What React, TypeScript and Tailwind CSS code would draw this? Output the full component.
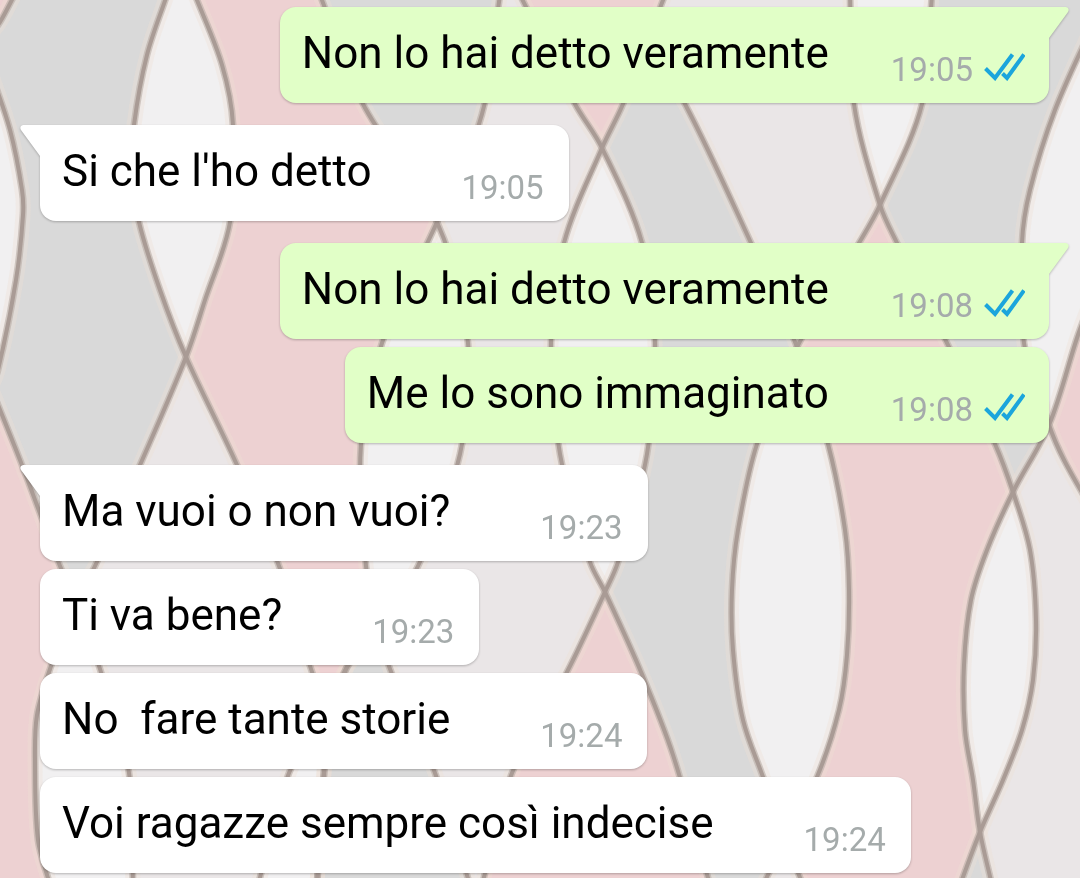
import React from "react";

type Point = [number, number];

type Region = { fill: string; left: Point[]; right: Point[] };

type Message = { text: string; time: string; sent: boolean; first: boolean };

const GREY = "#d9d9d9";
const PINK = "#edd1d2";
const WHITE = "#f1f0f1";
const LILAC = "#eae6e7";

const regions: Region[] = [
  {
    fill: GREY,
    left: [[-10, -10], [-10, 385], [20, 460], [60, 566], [76, 600]],
    right: [[167, -5], [147, 55], [134, 125], [132, 170], [139, 222], [160, 290], [186, 357], [140, 465], [95, 566], [76, 600]],
  },
  { fill: PINK, left: [[-10, -10], [-10, 30]], right: [[17, -10], [0, 22], [-10, 35]] },
  { fill: WHITE, left: [[-10, 70], [-10, 390]], right: [[-10, 70], [10, 130], [22, 190], [23, 215], [16, 280], [-2, 370], [-10, 390]] },
  {
    fill: PINK,
    left: [[-20, 385], [-20, 890]],
    right: [[-10, 385], [20, 460], [60, 566], [76, 600], [50, 669], [37, 715], [35, 760], [38, 840], [50, 885]],
  },
  {
    fill: WHITE,
    left: [[76, 600], [50, 669], [37, 715], [35, 760], [38, 840], [50, 885]],
    right: [[76, 600], [100, 669], [129, 773], [133, 885]],
  },
  {
    fill: WHITE,
    left: [[167, -5], [147, 55], [134, 125], [132, 170], [139, 222], [160, 290], [186, 357]],
    right: [[195, -5], [222, 65], [233, 125], [230, 222], [205, 300], [186, 357]],
  },
  {
    fill: PINK,
    left: [[195, -5], [222, 65], [233, 125], [230, 222], [205, 300], [186, 357], [237, 465], [279, 566], [311, 669], [326, 712]],
    right: [[320, -5], [363, 104], [437, 222], [382, 343], [361, 444], [366, 566], [378, 625], [346, 669], [326, 712]],
  },
  {
    fill: GREY,
    left: [[320, -5], [363, 104], [437, 222]],
    right: [[500, -5], [482, 114], [437, 222]],
  },
  {
    fill: WHITE,
    left: [[437, 222], [382, 343], [361, 444], [366, 566], [378, 625]],
    right: [[437, 222], [468, 343], [460, 454], [418, 566], [378, 625]],
  },
  {
    fill: GREY,
    left: [[378, 625], [346, 669], [324, 773], [317, 885]],
    right: [[378, 625], [390, 669], [435, 773], [470, 885]],
  },
  { fill: WHITE, left: [[326, 712], [289, 773], [258, 885]], right: [[326, 712], [324, 773], [317, 885]] },
  { fill: PINK, left: [[520, -5], [575, 104], [602, 148]], right: [[665, -5], [623, 104], [602, 148]] },
  {
    fill: GREY,
    left: [[647, 45], [623, 104], [602, 148], [642, 243], [655, 343], [647, 454], [618, 562], [605, 592], [641, 672], [673, 755], [710, 885]],
    right: [[647, 45], [685, 104], [751, 243], [797, 347], [757, 444], [738, 530], [732, 590], [733, 650], [743, 720], [763, 777], [785, 840], [763, 885]],
  },
  {
    fill: WHITE,
    left: [[602, 148], [564, 243], [551, 343], [560, 454], [590, 562], [605, 592]],
    right: [[602, 148], [642, 243], [655, 343], [647, 454], [618, 562], [605, 592]],
  },
  {
    fill: PINK,
    left: [[605, 592], [567, 672], [512, 773], [482, 885]],
    right: [[605, 592], [641, 672], [673, 755], [710, 885]],
  },
  {
    fill: WHITE,
    left: [[797, 347], [757, 444], [738, 530], [732, 590], [733, 650], [743, 720], [763, 777], [785, 840]],
    right: [[797, 347], [828, 444], [845, 530], [849, 590], [847, 655], [839, 710], [817, 777], [785, 840]],
  },
  {
    fill: PINK,
    left: [[880, 205], [859, 243], [797, 347], [828, 444], [845, 530], [849, 590], [847, 655], [839, 710], [817, 777], [785, 840], [803, 885]],
    right: [[880, 205], [897, 243], [947, 343], [995, 444], [1013, 492], [987, 550], [971, 600], [964, 665], [965, 730], [973, 780], [980, 832], [960, 885]],
  },
  { fill: WHITE, left: [[850, -5], [854, 104], [880, 205]], right: [[932, -5], [922, 104], [880, 205]] },
  {
    fill: GREY,
    left: [[932, -5], [922, 104], [880, 205], [897, 243], [947, 343], [995, 444], [1013, 492]],
    right: [[1095, -10], [1095, 20], [1055, 110], [1030, 190], [1022, 243], [1024, 343], [1049, 425], [1013, 492]],
  },
  {
    fill: WHITE,
    left: [[1095, 20], [1055, 110], [1030, 190], [1022, 243], [1024, 343], [1049, 425]],
    right: [[1095, 20], [1095, 290], [1078, 335], [1049, 425]],
  },
  { fill: PINK, left: [[1095, 290], [1078, 335], [1049, 425], [1064, 460], [1095, 515]], right: [[1095, 290], [1095, 515]] },
  {
    fill: WHITE,
    left: [[1013, 492], [987, 550], [971, 600], [964, 665], [965, 730], [973, 780], [980, 832]],
    right: [[1013, 492], [1030, 550], [1036, 620], [1033, 680], [1022, 730], [1003, 780], [980, 832]],
  },
  { fill: GREY, left: [[980, 832], [960, 885]], right: [[980, 832], [992, 885]] },
];

const strands: Point[][] = [
  [[17, -10], [0, 22], [-10, 35]],
  [[-10, 70], [10, 130], [22, 190], [23, 215], [16, 280], [-2, 370], [-10, 390]],
  [[-10, 385], [20, 460], [60, 566], [76, 600], [100, 669], [129, 773], [133, 885]],
  [[167, -5], [147, 55], [134, 125], [132, 170], [139, 222], [160, 290], [186, 357], [237, 465], [279, 566], [311, 669], [326, 712], [324, 773], [317, 885]],
  [[195, -5], [222, 65], [233, 125], [230, 222], [205, 300], [186, 357], [140, 465], [95, 566], [76, 600], [50, 669], [37, 715], [35, 760], [38, 840], [50, 885]],
  [[320, -5], [363, 104], [437, 222], [468, 343], [460, 454], [418, 566], [378, 625], [346, 669], [326, 712], [289, 773], [258, 885]],
  [[500, -5], [482, 114], [437, 222], [382, 343], [361, 444], [366, 566], [378, 625], [390, 669], [435, 773], [470, 885]],
  [[378, 625], [346, 669], [324, 773], [317, 885]],
  [[520, -5], [575, 104], [602, 148], [642, 243], [655, 343], [647, 454], [618, 562], [605, 592], [567, 672], [512, 773], [482, 885]],
  [[665, -5], [623, 104], [602, 148], [564, 243], [551, 343], [560, 454], [590, 562], [605, 592], [641, 672], [673, 755], [710, 885]],
  [[647, 45], [685, 104], [751, 243], [797, 347], [828, 444], [845, 530], [849, 590], [847, 655], [839, 710], [817, 777], [785, 840], [763, 885]],
  [[850, -5], [854, 104], [880, 205], [897, 243], [947, 343], [995, 444], [1013, 492], [1030, 550], [1036, 620], [1033, 680], [1022, 730], [1003, 780], [980, 832], [960, 885]],
  [[932, -5], [922, 104], [880, 205], [859, 243], [797, 347], [757, 444], [738, 530], [732, 590], [733, 650], [743, 720], [763, 777], [785, 840], [803, 885]],
  [[1095, 20], [1055, 110], [1030, 190], [1022, 243], [1024, 343], [1049, 425], [1064, 460], [1095, 515]],
  [[1095, 290], [1078, 335], [1049, 425], [1013, 492], [987, 550], [971, 600], [964, 665], [965, 730], [973, 780], [980, 832], [992, 885]],
];

function smooth(points: Point[]): string {
  const tangents = points.map((_, i): Point => {
    const a = points[Math.max(i - 1, 0)];
    const b = points[Math.min(i + 1, points.length - 1)];
    const length = Math.hypot(b[0] - a[0], b[1] - a[1]) || 1;
    return [(b[0] - a[0]) / length, (b[1] - a[1]) / length];
  });
  return points
    .slice(0, -1)
    .map((p, i) => {
      const q = points[i + 1];
      const reach = Math.hypot(q[0] - p[0], q[1] - p[1]) / 3;
      const c1 = [p[0] + tangents[i][0] * reach, p[1] + tangents[i][1] * reach];
      const c2 = [q[0] - tangents[i + 1][0] * reach, q[1] - tangents[i + 1][1] * reach];
      return `C${c1.join(" ")} ${c2.join(" ")} ${q.join(" ")}`;
    })
    .join("");
}

function outline({ left, right }: Region): string {
  const back = [...right].reverse();
  const forward = left.map((p) => p.join(" ")).join("L");
  return `M${forward}L${back.map((p) => p.join(" ")).join("L")}Z`;
}

function Wallpaper() {
  const lines = strands.map((points) => `M${points[0].join(" ")}${smooth(points)}`);
  return (
    <svg
      aria-hidden="true"
      className="absolute inset-0 h-full w-full"
      viewBox="0 0 1080 878"
      preserveAspectRatio="xMidYMid slice"
    >
      <rect width="1080" height="878" fill={LILAC} />
      {regions.map((region, index) => (
        <path key={index} d={outline(region)} fill={region.fill} />
      ))}
      <g fill="none">
        {lines.map((d) => (
          <path key={d} d={d} stroke="#efdfd4" strokeOpacity="0.35" strokeWidth="15" />
        ))}
        {lines.map((d) => (
          <path key={d} d={d} stroke="#b8aba5" strokeWidth="7" strokeOpacity="0.6" />
        ))}
        {lines.map((d) => (
          <path key={d} d={d} stroke="#a99b95" strokeWidth="4" />
        ))}
      </g>
    </svg>
  );
}

const messages: Message[] = [
  { text: "Non lo hai detto veramente", time: "19:05", sent: true, first: true },
  { text: "Si che l'ho detto", time: "19:05", sent: false, first: true },
  { text: "Non lo hai detto veramente", time: "19:08", sent: true, first: true },
  { text: "Me lo sono immaginato", time: "19:08", sent: true, first: false },
  { text: "Ma vuoi o non vuoi?", time: "19:23", sent: false, first: true },
  { text: "Ti va bene?", time: "19:23", sent: false, first: false },
  { text: "No  fare tante storie", time: "19:24", sent: false, first: false },
  { text: "Voi ragazze sempre così indecise", time: "19:24", sent: false, first: false },
];

function ReadTicks() {
  return (
    <svg role="img" aria-label="Letto" className="-mt-1.5 h-7 w-[42px]" viewBox="0 0 42 28" fill="none" stroke="#1ba5dc" strokeWidth="4">
      <path d="M2.5 15.5 12 25 29.5 1.5" />
      <path d="M19.5 20.5 24 25 41 1.5" />
    </svg>
  );
}

function Tail({ sent }: { sent: boolean }) {
  return sent ? (
    <svg aria-hidden="true" className="absolute top-0 left-full -ml-0.5 h-8 w-[22px]" viewBox="0 0 22 32" fill="#e1ffc7">
      <path d="M0 0H19Q23 1 21 5L2 31V32H0Z" />
    </svg>
  ) : (
    <svg aria-hidden="true" className="absolute top-0 right-full -mr-0.5 h-8 w-[22px]" viewBox="0 0 22 32" fill="#ffffff">
      <path d="M22 0H3Q-1 1 1 5L20 31V32H22Z" />
    </svg>
  );
}

function Bubble({ message }: { message: Message }) {
  const { text, time, sent, first } = message;
  const side = sent ? "self-end bg-[#e1ffc7] pr-6 gap-[62px]" : "self-start bg-white pr-[25px] gap-[90px]";
  const corner = !first ? "rounded-2xl" : sent ? "rounded-2xl rounded-tr-none" : "rounded-2xl rounded-tl-none";
  return (
    <li className={`relative flex h-24 items-start pl-[22px] drop-shadow-[0_1px_1px_rgba(0,0,0,0.25)] ${side} ${corner} ${first ? "mt-[22px] first:mt-0" : "mt-2"}`}>
      {first && <Tail sent={sent} />}
      <p className="pt-5 text-[44px] leading-[52px] whitespace-pre text-black">{text}</p>
      <div className="flex items-center gap-2.5 self-end pb-[13px]">
        <time className="text-[33px] leading-10 text-[#a5abab]">{time}</time>
        {sent && <ReadTicks />}
      </div>
    </li>
  );
}

export default function App() {
  return (
    <main className="relative min-h-screen overflow-hidden font-[Roboto,sans-serif]">
      <Wallpaper />
      <ul className="relative flex flex-col pt-[7px] pr-[31px] pb-[5px] pl-10">
        {messages.map((message, index) => (
          <Bubble key={index} message={message} />
        ))}
      </ul>
    </main>
  );
}
